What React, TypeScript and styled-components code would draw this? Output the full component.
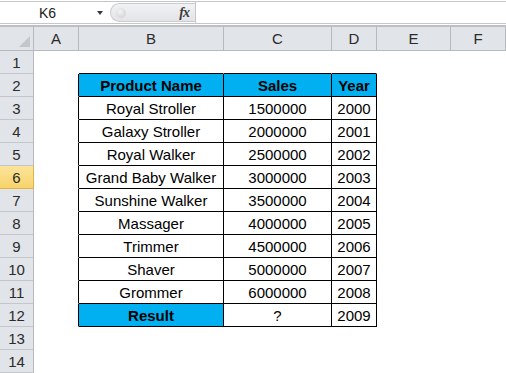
import React from 'react';
import styled, { createGlobalStyle, css } from 'styled-components';

const GlobalStyle = createGlobalStyle`
	html, body {
		margin: 0;
		padding: 0;
		background: #ffffff;
	}
	body {
		font-family: 'Liberation Sans', Arial, sans-serif;
		overflow: hidden;
	}
`;

const Window = styled.div`
	display: flex;
	flex-direction: column;
	width: 506px;
	height: 373px;
	padding-top: 1px;
	box-sizing: border-box;
	background: #ffffff;
`;

const FormulaBar = styled.div`
	display: flex;
	height: 23px;
	box-sizing: border-box;
	border-top: 1px solid #c4c6c9;
	border-bottom: 1px solid #c4c6c9;
`;

const NameBox = styled.div`
	display: flex;
	align-items: center;
	width: 110px;
	padding-left: 39px;
	box-sizing: border-box;
	font-size: 14px;
	color: #1a1a1a;
`;

const NameText = styled.span`
	flex: 1;
`;

const DropArrow = styled.span`
	width: 0;
	height: 0;
	margin-right: 7px;
	border-left: 3px solid transparent;
	border-right: 3px solid transparent;
	border-top: 4px solid #3a3a3a;
`;

const FxPill = styled.div`
	display: flex;
	align-items: center;
	justify-content: space-between;
	width: 85px;
	margin: 1px 0;
	padding: 0 6px 0 5px;
	box-sizing: border-box;
	border: 1px solid #c9ccd0;
	border-right: none;
	border-radius: 12px 0 0 12px;
	background: linear-gradient(#f1f2f4, #e2e4e7);
`;

const Knob = styled.span`
	width: 10px;
	height: 10px;
	border-radius: 50%;
	background: radial-gradient(circle at 40% 35%, #f4f4f4, #c9cbcd);
`;

const FxLabel = styled.span`
	font-family: 'Liberation Serif', 'Times New Roman', serif;
	font-style: italic;
	font-weight: bold;
	font-size: 14px;
	color: #3c3c3c;
	letter-spacing: -1px;
`;

const FormulaInput = styled.div`
	flex: 1;
	border-left: 1px solid #c4c6c9;
	background: #ffffff;
`;

const BarGap = styled.div`
	height: 3px;
	box-sizing: border-box;
	border-bottom: 2px solid #bdbfc2;
`;

const Sheet = styled.div`
	display: grid;
	grid-template-columns: 34px 45px 145px 108px 45px 74px 1fr;
	grid-template-rows: 24px;
	grid-auto-rows: 23px;
	flex: 1;
`;

const headerBase = css`
	display: flex;
	align-items: center;
	justify-content: center;
	box-sizing: border-box;
	background: #e1e4e8;
	border-right: 1px solid #b6b9bd;
	border-bottom: 1px solid #c3c6ca;
	font-size: 15px;
	color: #2b2b2b;
`;

const Corner = styled.div`
	${headerBase};
	justify-content: flex-end;
	align-items: flex-end;
	padding: 0 3px 3px 0;
	border-bottom-color: #b6b9bd;
`;

const ColHeader = styled.div`
	${headerBase};
	border-bottom-color: #b6b9bd;
`;

const RowHeader = styled.div<{ $active?: boolean }>`
	${headerBase};
	${({ $active }) =>
		$active &&
		css`
			background: linear-gradient(#fbe39a, #f7d46a);
			border-bottom-color: #e2b34c;
			border-right-color: #e2b34c;
		`}
`;

const Cell = styled.div<{ $fill?: boolean; $bold?: boolean; $right?: boolean; $bottom?: boolean }>`
	display: flex;
	align-items: center;
	justify-content: center;
	box-sizing: border-box;
	overflow: hidden;
	white-space: nowrap;
	font-size: 15px;
	color: #000000;
	background: ${({ $fill }) => ($fill ? '#00b0f0' : '#ffffff')};
	font-weight: ${({ $bold }) => ($bold ? 700 : 400)};
	border-right: 1px solid ${({ $right }) => ($right ? '#000000' : 'transparent')};
	border-bottom: 1px solid ${({ $bottom }) => ($bottom ? '#000000' : 'transparent')};
`;

const columns = ['A', 'B', 'C', 'D', 'E', 'F'];

const tableRows: [string, string, string][] = [
	['Product Name', 'Sales', 'Year'],
	['Royal Stroller', '1500000', '2000'],
	['Galaxy Stroller', '2000000', '2001'],
	['Royal Walker', '2500000', '2002'],
	['Grand Baby Walker', '3000000', '2003'],
	['Sunshine Walker', '3500000', '2004'],
	['Massager', '4000000', '2005'],
	['Trimmer', '4500000', '2006'],
	['Shaver', '5000000', '2007'],
	['Grommer', '6000000', '2008'],
	['Result', '?', '2009'],
];

const FIRST_ROW = 2;
const LAST_ROW = 12;

function cellValue(row: number, col: number): string {
	if (row < FIRST_ROW || row > LAST_ROW || col < 1 || col > 3) return '';
	return tableRows[row - FIRST_ROW][col - 1];
}

function CornerMark() {
	return (
		<svg width='11' height='11' viewBox='0 0 11 11'>
			<polygon points='11,0 11,11 0,11' fill='#c3c7cc' />
		</svg>
	);
}

export default function App(): JSX.Element {
	const rows = Array.from({ length: 14 }, (_, i) => i + 1);

	return (
		<Window>
			<GlobalStyle />
			<FormulaBar>
				<NameBox>
					<NameText>K6</NameText>
					<DropArrow />
				</NameBox>
				<FxPill>
					<Knob />
					<FxLabel>fx</FxLabel>
				</FxPill>
				<FormulaInput />
			</FormulaBar>
			<BarGap />
			<Sheet>
				<Corner>
					<CornerMark />
				</Corner>
				{columns.map((c) => (
					<ColHeader key={c}>{c}</ColHeader>
				))}
				{rows.map((r) => (
					<React.Fragment key={r}>
						<RowHeader $active={r === 6}>{r}</RowHeader>
						{columns.map((c, i) => {
							const inRows = r >= FIRST_ROW && r <= LAST_ROW;
							const inTable = inRows && i >= 1 && i <= 3;
							const fill = (r === FIRST_ROW && inTable) || (r === LAST_ROW && i === 1);
							return (
								<Cell
									key={c}
									$fill={fill}
									$bold={fill}
									$right={inRows && i <= 3}
									$bottom={r >= FIRST_ROW - 1 && r <= LAST_ROW && i >= 1 && i <= 3}
								>
									{cellValue(r, i)}
								</Cell>
							);
						})}
					</React.Fragment>
				))}
			</Sheet>
		</Window>
	);
}
